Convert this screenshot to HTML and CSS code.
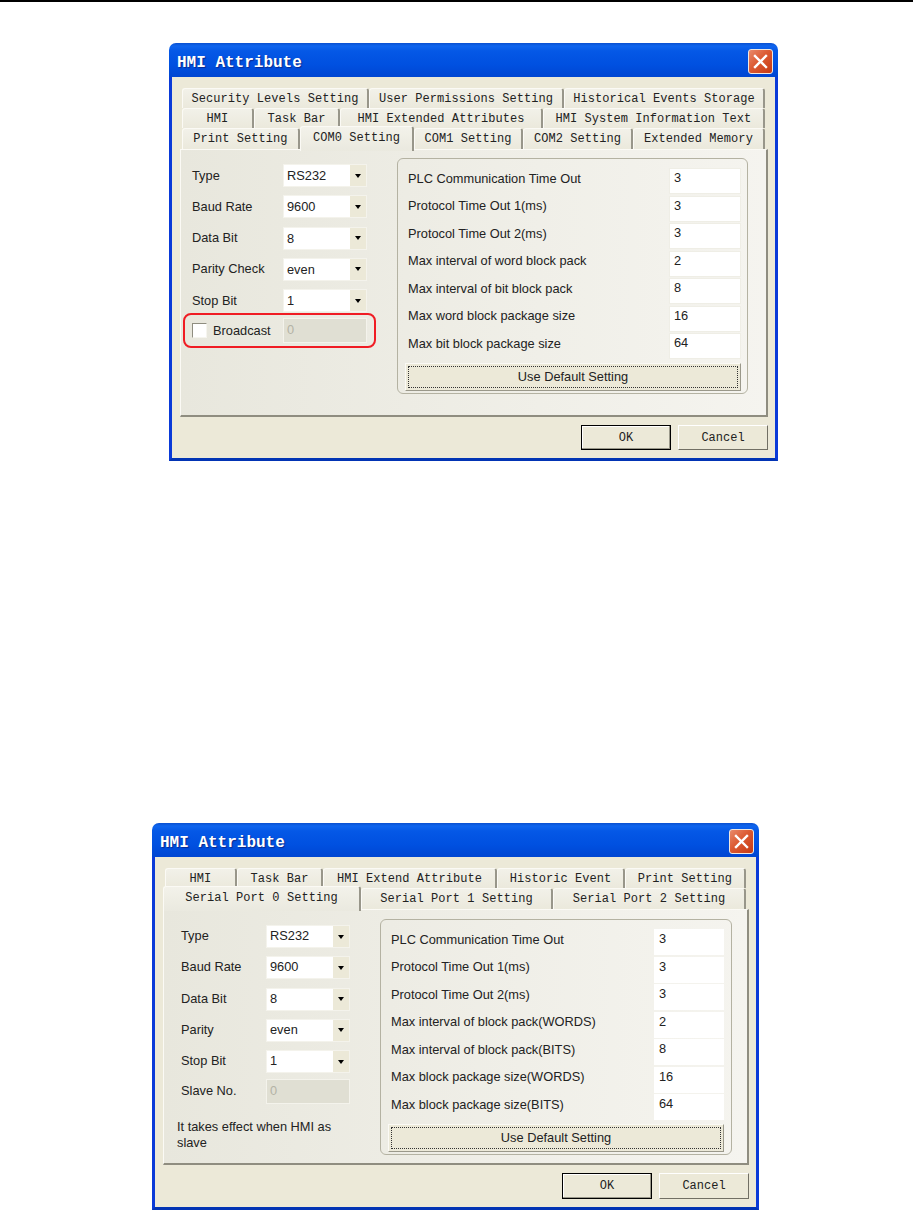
FILE: index.html
```html
<!DOCTYPE html>
<html lang="en">
<head>
    <meta charset="UTF-8">
    <meta name="viewport" content="width=device-width, initial-scale=1.0">
    <title>HMI Attribute</title>
    <link rel="stylesheet" href="styles.css">
</head>
<body>
    <div class="page-rule"></div>

    <!-- First dialog: COM0 page -->
    <div class="dialog dialog-com">
        <div class="titlebar">
            <div class="title">HMI Attribute</div>
            <div class="close-button">
                <svg width="15" height="15" viewBox="0 0 15 15"><path d="M2 2 L13 13 M13 2 L2 13" stroke="#fff" stroke-width="2.4" stroke-linecap="square"/></svg>
            </div>
        </div>
        <div class="dialog-body">
            <div class="tabs">
                <div class="tab-row row-security">
                    <div class="tab">Security Levels Setting</div>
                    <div class="tab">User Permissions Setting</div>
                    <div class="tab">Historical Events Storage</div>
                </div>
                <div class="tab-row row-hmi">
                    <div class="tab">HMI</div>
                    <div class="tab">Task Bar</div>
                    <div class="tab">HMI Extended Attributes</div>
                    <div class="tab">HMI System Information Text</div>
                </div>
                <div class="tab-row row-print">
                    <div class="tab">Print Setting</div>
                    <div class="tab tab-active">COM0 Setting</div>
                    <div class="tab">COM1 Setting</div>
                    <div class="tab">COM2 Setting</div>
                    <div class="tab">Extended Memory</div>
                </div>
            </div>
            <div class="panel">
                <div class="port-form">
                    <div class="form-row"><div class="form-label">Type</div><div class="combo"><span class="combo-value">RS232</span><span class="combo-arrow"></span></div></div>
                    <div class="form-row"><div class="form-label">Baud Rate</div><div class="combo"><span class="combo-value">9600</span><span class="combo-arrow"></span></div></div>
                    <div class="form-row"><div class="form-label">Data Bit</div><div class="combo"><span class="combo-value">8</span><span class="combo-arrow"></span></div></div>
                    <div class="form-row"><div class="form-label">Parity Check</div><div class="combo"><span class="combo-value">even</span><span class="combo-arrow"></span></div></div>
                    <div class="form-row"><div class="form-label">Stop Bit</div><div class="combo"><span class="combo-value">1</span><span class="combo-arrow"></span></div></div>
                    <div class="broadcast">
                        <div class="checkbox"></div>
                        <div class="broadcast-label">Broadcast</div>
                        <div class="disabled-field">0</div>
                    </div>
                </div>
                <div class="group">
                    <div class="group-row"><div class="group-label">PLC Communication Time Out</div><div class="field">3</div></div>
                    <div class="group-row"><div class="group-label">Protocol Time Out 1(ms)</div><div class="field">3</div></div>
                    <div class="group-row"><div class="group-label">Protocol Time Out 2(ms)</div><div class="field">3</div></div>
                    <div class="group-row"><div class="group-label">Max interval of word block pack</div><div class="field">2</div></div>
                    <div class="group-row"><div class="group-label">Max interval of bit block pack</div><div class="field">8</div></div>
                    <div class="group-row"><div class="group-label">Max word block package size</div><div class="field">16</div></div>
                    <div class="group-row"><div class="group-label">Max bit block package size</div><div class="field">64</div></div>
                    <div class="default-button"><span class="default-inner">Use Default Setting</span></div>
                </div>
            </div>
            <div class="footer">
                <div class="button button-ok">OK</div>
                <div class="button">Cancel</div>
            </div>
        </div>
    </div>

    <!-- Second dialog: serial port page -->
    <div class="dialog dialog-serial">
        <div class="titlebar">
            <div class="title">HMI Attribute</div>
            <div class="close-button">
                <svg width="15" height="15" viewBox="0 0 15 15"><path d="M2 2 L13 13 M13 2 L2 13" stroke="#fff" stroke-width="2.4" stroke-linecap="square"/></svg>
            </div>
        </div>
        <div class="dialog-body">
            <div class="tabs">
                <div class="tab-row row-basic">
                    <div class="tab">HMI</div>
                    <div class="tab">Task Bar</div>
                    <div class="tab">HMI Extend Attribute</div>
                    <div class="tab">Historic Event</div>
                    <div class="tab">Print Setting</div>
                </div>
                <div class="tab-row row-serial">
                    <div class="tab tab-active">Serial Port 0 Setting</div>
                    <div class="tab">Serial Port 1 Setting</div>
                    <div class="tab">Serial Port 2 Setting</div>
                </div>
            </div>
            <div class="panel">
                <div class="port-form">
                    <div class="form-row"><div class="form-label">Type</div><div class="combo"><span class="combo-value">RS232</span><span class="combo-arrow"></span></div></div>
                    <div class="form-row"><div class="form-label">Baud Rate</div><div class="combo"><span class="combo-value">9600</span><span class="combo-arrow"></span></div></div>
                    <div class="form-row"><div class="form-label">Data Bit</div><div class="combo"><span class="combo-value">8</span><span class="combo-arrow"></span></div></div>
                    <div class="form-row"><div class="form-label">Parity</div><div class="combo"><span class="combo-value">even</span><span class="combo-arrow"></span></div></div>
                    <div class="form-row"><div class="form-label">Stop Bit</div><div class="combo"><span class="combo-value">1</span><span class="combo-arrow"></span></div></div>
                    <div class="form-row slave-row"><div class="form-label">Slave No.</div><div class="disabled-field">0</div></div>
                    <div class="slave-note">It takes effect when HMI as slave</div>
                </div>
                <div class="group">
                    <div class="group-row"><div class="group-label">PLC Communication Time Out</div><div class="field">3</div></div>
                    <div class="group-row"><div class="group-label">Protocol Time Out 1(ms)</div><div class="field">3</div></div>
                    <div class="group-row"><div class="group-label">Protocol Time Out 2(ms)</div><div class="field">3</div></div>
                    <div class="group-row"><div class="group-label">Max interval of block pack(WORDS)</div><div class="field">2</div></div>
                    <div class="group-row"><div class="group-label">Max interval of block pack(BITS)</div><div class="field">8</div></div>
                    <div class="group-row"><div class="group-label">Max block package size(WORDS)</div><div class="field">16</div></div>
                    <div class="group-row"><div class="group-label">Max block package size(BITS)</div><div class="field">64</div></div>
                    <div class="default-button"><span class="default-inner">Use Default Setting</span></div>
                </div>
            </div>
            <div class="footer">
                <div class="button button-ok">OK</div>
                <div class="button">Cancel</div>
            </div>
        </div>
    </div>
</body>
</html>
```

FILE: styles.css
```css
* {
    box-sizing: border-box;
}
body {
    margin: 0;
    background-color: #fff;
    font-family: "Liberation Sans", Arial, sans-serif;
    font-size: 12.8px;
    color: #222;
}
.page-rule {
    height: 2px;
    background-color: #000;
}
/* Window frame */
.dialog {
    display: flex;
    flex-direction: column;
}
.dialog-com {
    width: 609px;
    height: 418px;
    margin: 41px 0 0 169px;
}
.dialog-serial {
    width: 607px;
    height: 387px;
    margin: 362px 0 0 152px;
}
.titlebar {
    display: flex;
    justify-content: space-between;
    height: 34px;
    padding: 6px 5px 0 8px;
    border-radius: 7px 7px 0 0;
    background: linear-gradient(to bottom, #0a50d0 0, #0f65ee 3px, #0558e6 8px, #0050e0 22px, #0046d2 34px);
}
.title {
    margin-top: 5px;
    font-family: "Liberation Mono", monospace;
    font-size: 16px;
    font-weight: bold;
    line-height: 18px;
    color: #fff;
    text-shadow: 1px 1px 1px #0a2a90;
}
.close-button {
    display: flex;
    align-items: center;
    justify-content: center;
    width: 25px;
    height: 25px;
    border: 1px solid #f0e8e0;
    border-radius: 3px;
    background: linear-gradient(135deg, #e88a6c, #dc5a32 45%, #c63a14);
}
.dialog-body {
    display: flex;
    flex: 1;
    flex-direction: column;
    padding: 11px 7px 8px 8px;
    border: 3px solid #0a3ad8;
    border-top: none;
    border-bottom-color: #0234b4;
    background-color: #ece9d8;
}
/* Tabs */
.tabs {
    margin: 0 1px 0 2px;
}
.tab-row {
    display: grid;
    height: 20px;
}
.tab-row:last-child {
    height: 21px;
}
.row-security {
    grid-template-columns: 187px 195px 201px;
}
.row-hmi {
    grid-template-columns: 72px 86px 203px 222px;
}
.row-print {
    grid-template-columns: 118px 114px 109px 110px 132px;
}
.row-basic {
    grid-template-columns: 72px 86px 174px 128px 121px;
}
.row-serial {
    grid-template-columns: 198px 192px 193px;
    margin-left: -2px;
}
.tab {
    display: flex;
    align-items: center;
    justify-content: center;
    border-top: 1px solid #fbfaf5;
    border-left: 1px solid #fbfaf5;
    border-right: 2px solid #98968a;
    border-radius: 3px 3px 0 0;
    background: linear-gradient(to bottom, #f2f1e9, #ebe9dc);
    font-family: "Liberation Mono", monospace;
    font-size: 12px;
    letter-spacing: 0.05px;
    color: #222;
    white-space: nowrap;
}
.tab-active {
    position: relative;
    z-index: 1;
    margin-top: -2px;
    margin-bottom: -2px;
    padding-bottom: 2px;
    background: linear-gradient(to bottom, #f3f2ea, #eae9df);
}
/* Panel with the two columns */
.panel {
    display: flex;
    height: 268px;
    border-top: 1px solid #fbfaf5;
    border-left: 1px solid #fbfaf5;
    border-right: 2px solid #8f8d80;
    border-bottom: 2px solid #8f8d80;
    background: linear-gradient(to right, #e8e7dd, #f5f4ef);
}
.dialog-serial .panel {
    height: 256px;
}
.port-form {
    width: 216px;
    padding: 14px 0 0 11px;
}
.dialog-serial .port-form {
    padding: 15px 0 0 17px;
    width: 216px;
}
.form-row {
    display: flex;
    align-items: center;
    height: 23px;
    margin-bottom: 8.3px;
}
.form-label {
    width: 91px;
    padding-bottom: 1px;
}
.dialog-serial .form-label {
    width: 85px;
    padding-bottom: 2px;
}
.combo {
    display: flex;
    width: 84px;
    height: 23px;
    border: 1px solid #f4f3ec;
    background-color: #fff;
}
.combo-value {
    flex: 1;
    padding-left: 3px;
    line-height: 22px;
}
.dialog-serial .combo-value {
    line-height: 20px;
}
.combo-arrow {
    display: flex;
    align-items: center;
    justify-content: center;
    width: 16px;
    background-color: #ece9d8;
}
.combo-arrow::after {
    content: "";
    border-top: 4px solid #000;
    border-left: 3.5px solid transparent;
    border-right: 3.5px solid transparent;
}
.disabled-field {
    width: 84px;
    height: 25px;
    padding-left: 3px;
    border: 1px solid #f4f3ec;
    background-color: #e0dfd3;
    color: #b4b3a6;
    line-height: 21px;
}
/* Red mark round the broadcast row */
.broadcast {
    display: flex;
    align-items: center;
    width: 193px;
    height: 35px;
    margin: -7.3px 0 0 -9px;
    padding-left: 7px;
    border: 2px solid #f01c24;
    border-radius: 8px;
}
.checkbox {
    width: 15px;
    height: 15px;
    border: 1px solid #f6f5ef;
    border-top-color: #8f8d80;
    border-left-color: #8f8d80;
    background-color: #fff;
}
.broadcast-label {
    width: 76px;
    padding-left: 6px;
}
.slave-row {
    height: 25px;
    margin-top: -2.3px;
}
.slave-note {
    width: 175px;
    margin: 15px 0 0 -4px;
    line-height: 16px;
}
/* Group on the right */
.group {
    width: 351px;
    height: 236px;
    margin-top: 8px;
    padding: 9px 6px 0 10px;
    border: 1px solid #b4b2a2;
    border-radius: 6px;
}
.dialog-serial .group {
    width: 352px;
    margin-top: 9px;
    padding-right: 7px;
}
.group-row {
    display: flex;
    align-items: center;
    justify-content: space-between;
    height: 26px;
    margin-bottom: 1.5px;
}
.group-label {
    padding-bottom: 6px;
}
.field {
    width: 72px;
    height: 26px;
    padding-left: 4px;
    border: 1px solid #efeee6;
    background-color: #fff;
    line-height: 18px;
}
.dialog-serial .field {
    width: 70px;
    border-color: #fff;
}
.default-button {
    display: flex;
    height: 28px;
    margin: 3.5px 0 0 -3px;
    padding: 2px;
    border: 1px solid #9a988a;
    border-top-color: #fbfaf5;
    border-left-color: #fbfaf5;
    background-color: #ece9d8;
}
.default-inner {
    flex: 1;
    border: 1px dotted #333;
    text-align: center;
    line-height: 19px;
}
/* OK and Cancel */
.footer {
    display: flex;
    justify-content: flex-end;
    gap: 7px;
    margin-top: 8px;
}
.button {
    width: 90px;
    height: 25px;
    border: 1px solid #716f64;
    border-top-color: #fff;
    border-left-color: #fff;
    background-color: #ece9d8;
    font-family: "Liberation Mono", monospace;
    font-size: 12px;
    text-align: center;
    line-height: 24px;
}
.dialog-serial .button {
    height: 26px;
    line-height: 25px;
}
.button-ok {
    border: 1px solid #000;
    box-shadow: inset -1px -1px 0 #9a988a, inset 1px 1px 0 #fff;
}
```
